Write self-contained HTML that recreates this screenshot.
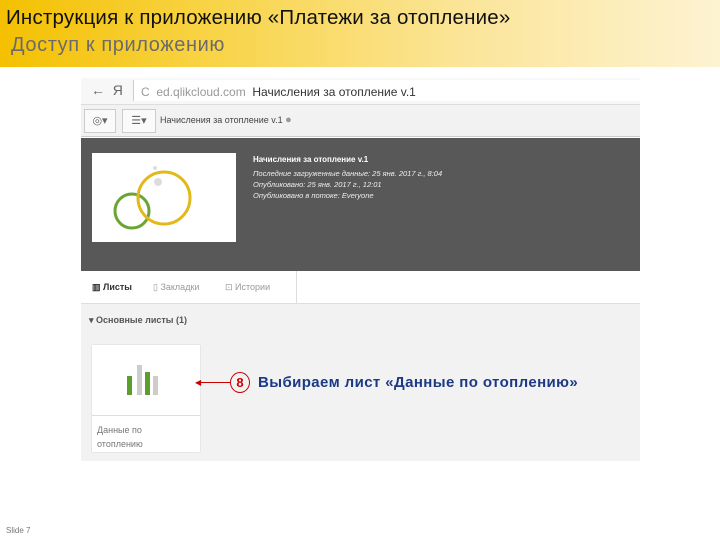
<!DOCTYPE html>
<html><head><meta charset="utf-8"><style>
body{margin:0;width:720px;height:540px;position:relative;background:#fff;font-family:"Liberation Sans",sans-serif;overflow:hidden}
.a{position:absolute}
</style></head><body>
<div class="a" style="left:0;top:0;width:720px;height:67px;background:linear-gradient(90deg,#f4c000 0%,#f8d448 30%,#fbe59a 65%,#fdf3d2 100%)"></div>
<div class="a" style="left:6px;top:6px;font-size:20.5px;color:#111;letter-spacing:0.2px">Инструкция к приложению «Платежи за отопление»</div>
<div class="a" style="left:11px;top:34px;font-size:20px;color:#6b6b6b;letter-spacing:0.6px">Доступ к приложению</div>

<div class="a" style="left:81px;top:78px;width:559px;height:26px;background:#f7f7f7;border-bottom:1px solid #ddd"></div>
<div class="a" style="left:91px;top:82px;font-size:14px;color:#666">← &nbsp;Я</div>
<div class="a" style="left:133px;top:80px;width:507px;height:21px;background:#fff;border-left:1px solid #ccc"></div>
<div class="a" style="left:141px;top:85px;font-size:12px;color:#999">C&nbsp; ed.qlikcloud.com&nbsp; <span style="color:#333">Начисления за отопление v.1</span></div>

<div class="a" style="left:81px;top:105px;width:559px;height:31px;background:#f2f2f2;border-bottom:1px solid #ccc"></div>
<div class="a" style="left:84px;top:109px;width:30px;height:22px;border:1px solid #ccc;background:#fafafa;font-size:11px;color:#666;line-height:22px;text-align:center">◎▾</div>
<div class="a" style="left:122px;top:109px;width:32px;height:22px;border:1px solid #ccc;background:#fafafa;font-size:11px;color:#666;line-height:22px;text-align:center">☰▾</div>
<div class="a" style="left:160px;top:114px;font-size:9px;color:#444">Начисления за отопление v.1 <span style="color:#999;font-size:11px">●</span></div>

<div class="a" style="left:81px;top:138px;width:559px;height:133px;background:#585858"></div>
<div class="a" style="left:92px;top:153px;width:144px;height:89px;background:#fff"></div>
<svg class="a" style="left:92px;top:153px" width="144" height="89"><circle cx="40" cy="58" r="17" fill="none" stroke="#6aa534" stroke-width="3"/><circle cx="72" cy="45" r="26" fill="none" stroke="#e2b81a" stroke-width="3"/><circle cx="66" cy="29" r="4" fill="#ddd"/><circle cx="63" cy="15" r="2" fill="#ddd"/></svg>
<div class="a" style="left:253px;top:155px;font-size:8px;color:#fff;font-weight:bold">Начисления за отопление v.1</div>
<div class="a" style="left:253px;top:168px;font-size:7.5px;color:#eee;line-height:11px;font-style:italic">Последние загруженные данные: 25 янв. 2017 г., 8:04<br>Опубликовано: 25 янв. 2017 г., 12:01<br>Опубликовано в потоке: Everyone</div>

<div class="a" style="left:81px;top:271px;width:559px;height:32px;background:#fff;border-bottom:1px solid #ddd"></div>
<div class="a" style="left:296px;top:271px;width:1px;height:32px;background:#ddd"></div>
<div class="a" style="left:92px;top:282px;font-size:9px;color:#333;font-weight:bold">▥ Листы</div>
<div class="a" style="left:153px;top:282px;font-size:9px;color:#999">▯ Закладки</div>
<div class="a" style="left:225px;top:282px;font-size:9px;color:#999">⊡ Истории</div>
<div class="a" style="left:81px;top:304px;width:559px;height:157px;background:#f2f2f2"></div>
<div class="a" style="left:89px;top:315px;font-size:9px;color:#555;font-weight:bold">▾ Основные листы (1)</div>
<div class="a" style="left:92px;top:345px;width:108px;height:107px;background:#fff;box-shadow:0 0 1px #bbb"></div>
<div class="a" style="left:92px;top:415px;width:108px;height:1px;background:#ddd"></div>
<div class="a" style="left:127px;top:376px;width:5px;height:19px;background:#5a9e2e"></div>
<div class="a" style="left:137px;top:365px;width:5px;height:30px;background:#ccc"></div>
<div class="a" style="left:145px;top:372px;width:5px;height:23px;background:#5a9e2e"></div>
<div class="a" style="left:153px;top:376px;width:5px;height:19px;background:#ccc"></div>
<div class="a" style="left:97px;top:423px;font-size:9px;color:#777;line-height:14px">Данные по<br>отоплению</div>

<div class="a" style="left:198px;top:382px;width:33px;height:1px;background:#c00"></div>
<div class="a" style="left:195px;top:378px;font-size:8px;color:#c00">◀</div>
<div class="a" style="left:230px;top:372px;width:20px;height:21px;border:1px solid #c00;border-radius:50%;box-sizing:border-box;text-align:center;font-size:13px;font-weight:bold;color:#c00;line-height:20px">8</div>
<div class="a" style="left:258px;top:374px;font-size:15px;font-weight:bold;color:#1c3a84;letter-spacing:0.4px">Выбираем лист «Данные по отоплению»</div>

<div class="a" style="left:6px;top:526px;font-size:8px;color:#777">Slide 7</div>
</body></html>
